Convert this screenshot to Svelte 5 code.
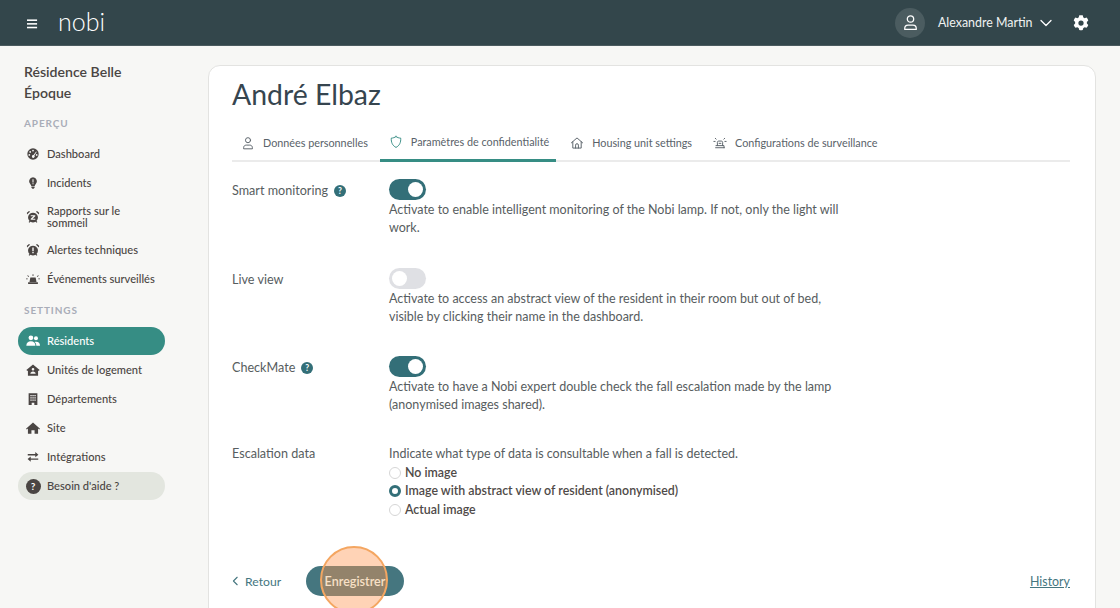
<script>
  const overview = [
    { label: "Dashboard", icon: "gauge" },
    { label: "Incidents", icon: "bulb" },
    { label: "Rapports sur le sommeil", icon: "clock", tight: true },
    { label: "Alertes techniques", icon: "alarm" },
    { label: "Événements surveillés", icon: "siren" },
  ];
  const settings = [
    { label: "Résidents", icon: "users", active: true },
    { label: "Unités de logement", icon: "unit" },
    { label: "Départements", icon: "building" },
    { label: "Site", icon: "home" },
    { label: "Intégrations", icon: "swap" },
  ];
  const tabs = [
    { label: "Données personnelles", icon: "person" },
    { label: "Paramètres de confidentialité", icon: "shield", active: true },
    { label: "Housing unit settings", icon: "house" },
    { label: "Configurations de surveillance", icon: "beacon" },
  ];
  const radios = [
    { label: "No image" },
    { label: "Image with abstract view of resident (anonymised)", checked: true },
    { label: "Actual image" },
  ];
</script>

{#snippet navIcon(name)}
  <svg class="nav-icon" viewBox="0 0 16 16" fill="currentColor">
    {#if name === "gauge"}
      <path fill-rule="evenodd" d="M8 1.500a6.500 6.500 0 1 1 0 13 6.500 6.500 0 0 1 0-13zM8 3a1 1 0 1 0 0 2 1 1 0 0 0 0-2zM4.800 4.600a1 1 0 1 0 0 2 1 1 0 0 0 0-2zM3.800 8a1 1 0 1 0 0 2 1 1 0 0 0 0-2zM11.600 5.200 8.600 9.200a1.600 1.600 0 1 0 1 .6l2.600-4.200zM12.200 8a1 1 0 1 0 0 2 1 1 0 0 0 0-2z" />
    {:else if name === "bulb"}
      <path fill-rule="evenodd" d="M8 1.500a4.600 4.600 0 0 1 3 8c-.5.5-.9 1.200-1 1.800H6c-.1-.6-.5-1.300-1-1.800a4.600 4.600 0 0 1 3-8zM7.400 3.600v3.800h1.200V3.600zM7.400 8.200v1.200h1.200V8.200z" />
      <path d="M6.200 12h3.600v1.200L8.800 14.500H7.200L6.200 13.200z" />
    {:else if name === "clock"}
      <path fill-rule="evenodd" d="M8 3a5.600 5.600 0 0 1 4 9.500l1 1.200-.9.8-1.200-1.100a5.600 5.600 0 0 1-5.800 0l-1.200 1.100-.9-.8 1-1.200A5.600 5.600 0 0 1 8 3zM5.400 6v1.200h3L5.400 10v1.200h5.200V10h-3l3-2.800V6z" />
      <path d="M1.200 5 4.600 2 3.400 1.200 1 3zM14.800 5 11.400 2l1.200-.8L15 3z" />
    {:else if name === "alarm"}
      <path fill-rule="evenodd" d="M8 3a5.600 5.600 0 0 1 4 9.500l1 1.200-.9.8-1.200-1.100a5.600 5.600 0 0 1-5.800 0l-1.200 1.100-.9-.8 1-1.200A5.600 5.600 0 0 1 8 3zM7.200 5v4.400h1.600V5zM7.200 10.200v1.500h1.600v-1.500z" />
      <path d="M1.200 5 4.600 2 3.400 1.200 1 3zM14.800 5 11.400 2l1.200-.8L15 3z" />
    {:else if name === "siren"}
      <path d="M5 6.200h6l1 5.200H4z" />
      <path d="M2.400 11.800h11.200v2H2.400zM0 7.400h2v1H0zM14 7.400h2v1h-2zM2 3.600l1.600 1.200-.6.8-1.600-1.200zM14 3.600l-1.600 1.200.6.8 1.600-1.200zM7.500 2.600h1v2h-1z" />
    {:else if name === "users"}
      <circle cx="5.600" cy="4.400" r="2.700" />
      <circle cx="11.400" cy="4.800" r="2.300" />
      <path d="M.4 13.400c0-3.200 2-5 5.200-5s5.200 1.800 5.200 5z" />
      <path d="M11.800 13.400H16c0-3-1.600-4.600-4.400-4.600-.8 0-1.300.1-1.800.3 1.300 1 2 2.500 2 4.300z" />
    {:else if name === "unit"}
      <path fill-rule="evenodd" d="M8 1.800 15.600 8 14.400 9l-.6-.5v6H2.200v-6l-.6.5L.4 8zM8 5.600a1.500 1.500 0 1 0 0 3 1.500 1.500 0 0 0 0-3zM5 12.400h6c0-1.500-1.300-2.600-3-2.600s-3 1.100-3 2.600z" />
    {:else if name === "building"}
      <path fill-rule="evenodd" d="M3 1.400h10v13.400H9.500v-2.600h-3v2.600H3zM5 3.400v1.500h1.500V3.400zM7.300 3.400v1.500h1.500V3.400zM9.600 3.400v1.500h1.500V3.400zM5 6v1.500h1.500V6zM7.300 6v1.500h1.500V6zM9.600 6v1.500h1.500V6zM5 8.600v1.500h1.500V8.600zM7.300 8.600v1.500h1.500V8.600zM9.600 8.600v1.500h1.500V8.600z" />
    {:else if name === "home"}
      <path d="M8 1.800 16 8.800l-.9 1-1.300-1.100v5.800H9.800v-4H6.200v4H2.200V8.700L.9 9.800l-.9-1z" />
    {:else if name === "swap"}
      <path d="M2 4.600h8.600V2.400l3.600 3-3.600 3V6.200H2zM14 11.200H5.400v2.200l-3.600-3 3.600-3v2.200H14z" />
    {/if}
  </svg>
{/snippet}

{#snippet tabIcon(name)}
  <svg class="tab-icon" viewBox="0 0 16 16" fill="none" stroke="currentColor" stroke-width="1.100" stroke-linecap="round" stroke-linejoin="round">
    {#if name === "person"}
      <circle cx="8" cy="4.800" r="2.900" />
      <path d="M3 14.200v-.9c0-1.700 1.300-2.900 3-2.900h4c1.700 0 3 1.200 3 2.900v.9z" />
    {:else if name === "shield"}
      <path d="M8 1.800c1.500 1.100 3.300 1.700 5.400 1.800.3 4.700-1.300 8.500-5.400 10.600C3.900 12.100 2.300 8.300 2.600 3.600 4.700 3.500 6.500 2.900 8 1.800z" />
    {:else if name === "house"}
      <path d="M1.600 7.800 8 2.200l6.400 5.600M3.200 6.600v7.200h9.600V6.600M6.400 13.800v-3.400a1.600 1.600 0 0 1 3.200 0v3.400" />
    {:else if name === "beacon"}
      <path d="M5 11V7.200c0-.8.600-1.400 1.400-1.400h3.200c.8 0 1.400.6 1.400 1.400V11M3 13.400h10M3.400 11h9.200v2.400M1 6.200h1.400M13.600 6.200H15M2.600 2.600l1 1M13.400 2.600l-1 1M7 8.400h2" />
    {/if}
  </svg>
{/snippet}

{#snippet help()}
  <span class="help">?</span>
{/snippet}

<div class="page">
  <header class="topbar">
    <div class="brand">
      <svg class="burger" viewBox="0 0 12 10" fill="#fff"><rect width="11" height="1.700" /><rect y="4" width="11" height="1.700" /><rect y="8" width="11" height="1.700" /></svg>
      <span class="logo">nobi</span>
    </div>
    <div class="account">
      <span class="avatar">
        <svg viewBox="0 0 16 16" fill="none" stroke="#fff" stroke-width="1.200" stroke-linejoin="round"><circle cx="8" cy="4.700" r="3" /><path d="M2.600 14.500v-1.100c0-1.800 1.400-3 3.100-3h4.600c1.700 0 3.100 1.200 3.100 3v1.100z" /></svg>
      </span>
      <span class="user-name">Alexandre Martin</span>
      <svg class="chevron" viewBox="0 0 12 8" fill="none" stroke="#fff" stroke-width="1.300" stroke-linecap="round" stroke-linejoin="round"><path d="M1 1.500 6 6.500l5-5" /></svg>
      <svg class="gear" viewBox="0 0 24 24" fill="#fff"><path fill-rule="evenodd" d="M12 1.500c.8 0 1.600.1 2.300.3l.8 2.700c.6.300 1.100.6 1.600 1l2.700-.7c1 1.100 1.800 2.400 2.300 3.900l-1.900 2c.1.600.1 1.200 0 1.800l1.900 2c-.5 1.500-1.300 2.800-2.300 3.900l-2.700-.7c-.5.400-1 .7-1.600 1l-.8 2.700c-1.500.4-3.100.4-4.600 0l-.8-2.700c-.6-.3-1.100-.6-1.600-1l-2.700.7c-1-1.100-1.800-2.400-2.300-3.900l1.900-2c-.1-.6-.1-1.200 0-1.800l-1.900-2c.5-1.500 1.300-2.800 2.300-3.900l2.700.7c.5-.4 1-.7 1.600-1l.8-2.700c.7-.2 1.500-.3 2.300-.3zm0 7a3.500 3.500 0 1 0 0 7 3.500 3.500 0 0 0 0-7z" /></svg>
    </div>
  </header>

  <div class="body">
    <aside class="sidebar">
      <h2 class="site">Résidence Belle Époque</h2>
      <div class="section">APERÇU</div>
      <nav class="nav">
        {#each overview as item}
          <div class="nav-item" class:tight={item.tight}>
            {@render navIcon(item.icon)}
            <span>{item.label}</span>
          </div>
        {/each}
      </nav>
      <div class="section">SETTINGS</div>
      <nav class="nav">
        {#each settings as item}
          <div class="nav-item" class:active={item.active}>
            {@render navIcon(item.icon)}
            <span>{item.label}</span>
          </div>
        {/each}
        <div class="nav-item support">
          <span class="support-mark">?</span>
          <span>Besoin d'aide ?</span>
        </div>
      </nav>
    </aside>

    <main class="card">
      <h1>André Elbaz</h1>
      <div class="tabs">
        {#each tabs as tab}
          <div class="tab" class:active={tab.active}>
            {@render tabIcon(tab.icon)}
            <span>{tab.label}</span>
          </div>
        {/each}
      </div>

      <section class="row first">
        <div class="label">Smart monitoring {@render help()}</div>
        <div class="control">
          <span class="switch on"></span>
          <p>Activate to enable intelligent monitoring of the Nobi lamp. If not, only the light will work.</p>
        </div>
      </section>
      <section class="row live">
        <div class="label">Live view</div>
        <div class="control">
          <span class="switch"></span>
          <p>Activate to access an abstract view of the resident in their room but out of bed, visible by clicking their name in the dashboard.</p>
        </div>
      </section>
      <section class="row check">
        <div class="label">CheckMate {@render help()}</div>
        <div class="control">
          <span class="switch on"></span>
          <p>Activate to have a Nobi expert double check the fall escalation made by the lamp (anonymised images shared).</p>
        </div>
      </section>
      <section class="row escalation">
        <div class="label">Escalation data</div>
        <div class="control">
          <p>Indicate what type of data is consultable when a fall is detected.</p>
          {#each radios as radio}
            <div class="radio">
              <span class="dot" class:checked={radio.checked}></span>
              <span>{radio.label}</span>
            </div>
          {/each}
        </div>
      </section>

      <footer class="actions">
        <span class="back">
          <svg viewBox="0 0 8 12" fill="none" stroke="currentColor" stroke-width="1.300" stroke-linecap="round" stroke-linejoin="round"><path d="M6 1.500 1.500 6 6 10.500" /></svg>
          Retour
        </span>
        <span class="save">
          <span class="spot"></span>
          <span class="save-label">Enregistrer</span>
        </span>
        <a class="history" href="#history">History</a>
      </footer>
    </main>
  </div>
</div>

<style>
  :global(body) {
    margin: 0;
    overflow: hidden;
    background: #f7f7f5;
  }
  .page {
    width: 1120px;
    height: 608px;
    overflow: hidden;
    display: flex;
    flex-direction: column;
    font-family: "Lato", "Open Sans", sans-serif;
    color: #4a4543;
  }
  .topbar {
    flex: 0 0 46px;
    box-sizing: border-box;
    background: #33464b;
    border-bottom: 1px solid #4b5b5f;
    display: flex;
    align-items: center;
    justify-content: space-between;
    padding: 0 30px 0 27px;
  }
  .brand {
    display: flex;
    align-items: center;
    gap: 20px;
  }
  .burger {
    width: 11px;
    height: 10px;
    margin-top: 2px;
  }
  .logo {
    font-weight: 300;
    font-size: 25px;
    line-height: 30px;
    color: #fff;
    margin-top: -3px;
  }
  .account {
    display: flex;
    align-items: center;
    color: #f0f2f2;
  }
  .avatar {
    width: 30px;
    height: 30px;
    border-radius: 50%;
    background: #4b5c60;
    display: flex;
    align-items: center;
    justify-content: center;
  }
  .avatar svg {
    width: 17px;
    height: 17px;
  }
  .user-name {
    width: 102px;
    white-space: nowrap;
    font-size: 12.400px;
    margin-left: 13px;
  }
  .chevron {
    width: 12px;
    height: 8px;
  }
  .gear {
    width: 18px;
    height: 18px;
    margin-left: 20px;
  }
  .body {
    flex: 1;
    display: flex;
    min-height: 0;
  }
  .sidebar {
    flex: 0 0 207.500px;
    box-sizing: border-box;
    padding: 15px 42.500px 0 18px;
  }
  .site {
    margin: 0 0 0 6px;
    font-size: 14.100px;
    line-height: 21px;
    font-weight: 600;
    color: #4a4543;
  }
  .section {
    margin: 13px 0 0 6px;
    font-size: 10px;
    line-height: 14px;
    font-weight: 700;
    letter-spacing: 0.900px;
    color: #a9adb8;
  }
  .nav {
    margin-top: 10px;
    display: flex;
    flex-direction: column;
    gap: 1px;
  }
  .nav + .section {
    margin-top: 10px;
  }
  .nav-item {
    height: 28px;
    border-radius: 14px;
    display: flex;
    align-items: center;
    gap: 7.500px;
    padding-left: 7.500px;
    font-size: 11.100px;
    font-weight: 500;
    line-height: 12px;
    color: #4a4543;
  }
  .nav-item.tight {
    height: 37px;
  }
  .nav-item.tight span {
    max-width: 90px;
  }
  .nav-item.active {
    background: #368d84;
    color: #fff;
  }
  .nav-item.support {
    background: #e3e6df;
  }
  .nav-icon {
    width: 14px;
    height: 14px;
    flex: none;
  }
  .support-mark {
    width: 15px;
    height: 15px;
    margin-right: -1px;
    border-radius: 50%;
    background: #4a4543;
    color: #fff;
    font-size: 10px;
    font-weight: 700;
    display: flex;
    align-items: center;
    justify-content: center;
  }
  .card {
    flex: 0 0 888px;
    box-sizing: border-box;
    height: 600px;
    margin-top: 18.500px;
    padding: 0 24.500px 0 23.500px;
    background: #fff;
    border: 1px solid #e3e3e1;
    border-radius: 12px;
    display: flex;
    flex-direction: column;
  }
  h1 {
    margin: 10.500px 0 0;
    font-size: 28.400px;
    line-height: 36px;
    font-weight: 400;
    color: #36454f;
  }
  .tabs {
    margin-top: 11.500px;
    height: 36px;
    display: flex;
    border-bottom: 2px solid #ebebeb;
    font-size: 10.800px;
    color: #596269;
  }
  .tab {
    height: 38px;
    box-sizing: border-box;
    display: flex;
    align-items: center;
    gap: 8px;
    padding: 0 7px 0 9px;
    margin-right: 5px;
  }
  .tab.active {
    border-bottom: 3px solid #368d84;
    margin-bottom: -2px;
    padding-top: 1px;
  }
  .tab.active .tab-icon {
    color: #368d84;
  }
  .tab-icon {
    width: 14px;
    height: 14px;
    flex: none;
  }
  .row {
    display: flex;
    font-size: 12.600px;
    color: #575d60;
  }
  .row.first {
    margin-top: 17px;
  }
  .row.live {
    margin-top: 31px;
  }
  .row.check {
    margin-top: 30px;
  }
  .row.escalation {
    margin-top: 31px;
  }
  .label {
    flex: 0 0 157px;
    display: flex;
    align-items: flex-start;
    gap: 6px;
    line-height: 18px;
    padding-top: 3px;
  }
  .escalation .label {
    padding-top: 0;
  }
  .control {
    width: 460px;
  }
  .control p {
    margin: 0;
    line-height: 18px;
    font-size: 12.500px;
  }
  .escalation .control p {
    margin-bottom: 1px;
  }
  .switch {
    display: block;
    position: relative;
    box-sizing: border-box;
    width: 37px;
    height: 21px;
    border-radius: 11px;
    background: #dfe0e4;
    margin-bottom: 1px;
  }
  .switch::after {
    content: "";
    position: absolute;
    top: 3px;
    left: 3px;
    width: 15px;
    height: 15px;
    border-radius: 50%;
    background: #fff;
  }
  .switch.on {
    background: #336f78;
  }
  .switch.on::after {
    left: 19px;
  }
  .help {
    width: 12px;
    height: 12px;
    margin-top: 3px;
    border-radius: 50%;
    background: #336f78;
    color: #fff;
    font-size: 8.500px;
    line-height: 12px;
    font-weight: 700;
    text-align: center;
  }
  .radio {
    display: flex;
    align-items: center;
    gap: 4px;
    height: 18.300px;
    font-size: 12.400px;
    font-weight: 600;
    color: #4f4a48;
  }
  .dot {
    box-sizing: border-box;
    width: 12px;
    height: 12px;
    border: 1px solid #d6d6d6;
    border-radius: 50%;
    margin-top: 1px;
  }
  .dot.checked {
    border: 3.500px solid #336f78;
  }
  .actions {
    position: relative;
    margin-top: 48px;
    height: 30px;
    display: flex;
    align-items: center;
    font-size: 12.400px;
    color: #45767f;
  }
  .back {
    display: flex;
    align-items: center;
    gap: 6px;
    width: 74px;
    font-size: 12.200px;
  }
  .back svg {
    width: 7px;
    height: 10px;
  }
  .save {
    position: relative;
    width: 98px;
    height: 30px;
    border-radius: 15px;
    background: #45767f;
    font-weight: 600;
    font-size: 12.600px;
    display: flex;
    align-items: center;
    justify-content: center;
  }
  .save-label {
    position: relative;
    color: #f8e0c6;
  }
  .spot {
    position: absolute;
    left: 14px;
    top: -20px;
    box-sizing: border-box;
    width: 68px;
    height: 68px;
    border-radius: 50%;
    background: rgba(255, 150, 80, 0.42);
    border: 2px solid #f4a661;
  }
  .history {
    margin-left: auto;
    color: #45767f;
    text-decoration: underline;
  }
</style>
